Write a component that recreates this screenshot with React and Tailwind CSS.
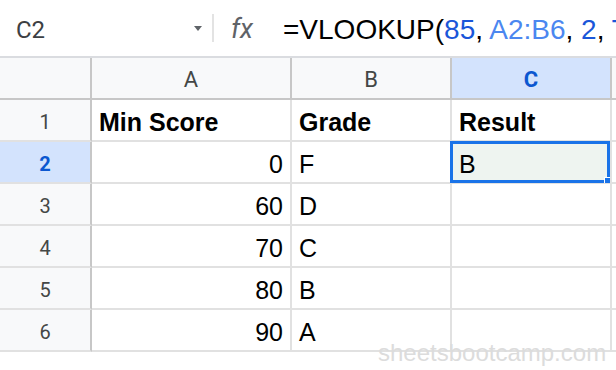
import React from 'react';

const rows = [
  { n: 1, a: 'Min Score', b: 'Grade', c: 'Result', bold: true },
  { n: 2, a: '0', b: 'F', c: 'B' },
  { n: 3, a: '60', b: 'D', c: '' },
  { n: 4, a: '70', b: 'C', c: '' },
  { n: 5, a: '80', b: 'B', c: '' },
  { n: 6, a: '90', b: 'A', c: '' },
];

const App = () => {
  return (
    <div className="relative w-[616px] h-[370px] overflow-hidden bg-white font-['Liberation_Sans',Arial,sans-serif]">
      {/* Formula bar */}
      <div className="flex items-center h-[58px] pt-[3px] border-b-2 border-[#dadce0] overflow-hidden">
        <div className="w-[212px] shrink-0 flex items-center pl-[16px] pr-[10px]">
          <span className="flex-1 text-[24px] text-[#3c4043] font-['Roboto',sans-serif]">C2</span>
          <svg width="8" height="6" viewBox="0 0 8 6" className="-mt-[2px]">
            <path d="M0 0 L8 0 L4 5 Z" fill="#5f6368" />
          </svg>
        </div>
        <div className="w-[2px] h-[28px] -mt-[3px] shrink-0 bg-[#e3e3e3]" />
        <span className="ml-[17px] w-[52px] shrink-0 text-[27px] italic text-[#5f6368] font-['Roboto',sans-serif]">fx</span>
        <span className="whitespace-nowrap shrink-0 text-[28px] text-black">
          =VLOOKUP(<span className="text-[#1a56d9]">85</span>, <span className="text-[#4b87f0]">A2:B6</span>, <span className="text-[#1a56d9]">2</span>, <span className="text-[#1a56d9]">TRUE</span>)
        </span>
      </div>

      {/* Column headers */}
      <div className="flex h-[42px] bg-[#f8f9fa] border-b-2 border-[#c7c7c7] text-[22px] font-['Roboto',sans-serif] text-[#444746]">
        <div className="w-[92px] border-r-2 border-[#c7c7c7]" />
        <div className="w-[200px] border-r-2 border-[#c7c7c7] flex items-center justify-center pt-[3px]">A</div>
        <div className="w-[160px] border-r-2 border-[#c7c7c7] flex items-center justify-center pt-[3px]">B</div>
        <div className="w-[160px] border-r-2 border-[#c7c7c7] flex items-center justify-center pt-[3px] bg-[#d3e3fd] text-[#0b57d0] font-bold">C</div>
        <div className="flex-1" />
      </div>

      {/* Rows */}
      {rows.map((r) => (
        <div key={r.n} className="flex h-[42px] text-[25px] text-black">
          <div
            className={`w-[92px] border-r-2 border-r-[#c7c7c7] border-b-2 border-b-[#e1e1e1] flex items-center justify-center pt-[4px] text-[20px] font-['Roboto',sans-serif] ${
              r.n === 2 ? 'bg-[#d3e3fd] text-[#0b57d0] font-bold' : 'bg-[#f8f9fa] text-[#444746]'
            }`}
          >
            {r.n}
          </div>
          <div
            className={`w-[200px] border-r-2 border-b-2 border-[#e1e1e1] flex items-center pt-[5px] px-[7px] ${
              r.bold ? 'font-bold justify-start' : 'justify-end'
            }`}
          >
            {r.a}
          </div>
          <div className={`w-[160px] border-r-2 border-b-2 border-[#e1e1e1] flex items-center pt-[5px] px-[7px] ${r.bold ? 'font-bold' : ''}`}>
            {r.b}
          </div>
          <div
            className={`relative w-[160px] border-r-2 border-b-2 border-[#e1e1e1] flex items-center pt-[5px] px-[7px] ${r.bold ? 'font-bold' : ''} ${
              r.n === 2 ? 'bg-[#eef4f0]' : ''
            }`}
          >
            {r.c}
            {r.n === 2 && (
              <div className="absolute -left-[2px] -top-[1px] right-0 -bottom-[1px] border-[3px] border-[#1a73e8]">
                <div className="absolute -right-[3px] -bottom-[3px] w-[6px] h-[6px] bg-[#1a73e8] border-l border-t border-white" />
              </div>
            )}
          </div>
          <div className="flex-1 border-b-2 border-[#e1e1e1]" />
        </div>
      ))}

      {/* Watermark */}
      <div className="absolute left-[378px] top-[335px] text-[24px] text-[#dcdcdc] whitespace-nowrap">
        sheetsbootcamp.com
      </div>
    </div>
  );
};

export default App;
